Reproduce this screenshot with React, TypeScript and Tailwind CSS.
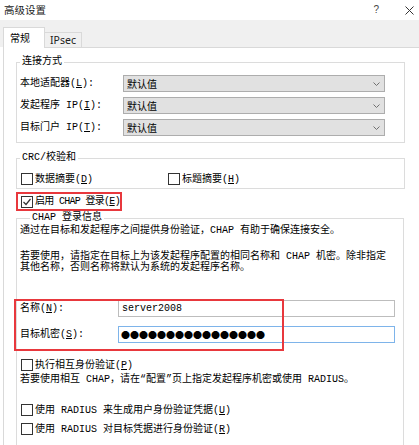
import React from 'react';

const body = "font-['Liberation_Mono','Noto_Sans_CJK_SC',monospace] text-[10px] leading-[11px] text-black";
const ui = "font-['Noto_Sans_CJK_SC',sans-serif]";

function K({ c }: { c: string }) {
  return <span className="underline underline-offset-1">{c}</span>;
}

function Chevron() {
  return (
    <svg width="7" height="4" viewBox="0 0 7 4" className="shrink-0">
      <polyline points="0.5,0.5 3.5,3.5 6.5,0.5" fill="none" stroke="#707070" strokeWidth="1" />
    </svg>
  );
}

function Check({ checked = false }: { checked?: boolean }) {
  return (
    <div className="w-[12px] h-[12px] border border-[#333] bg-white shrink-0 flex items-center justify-center">
      {checked && (
        <svg width="10" height="10" viewBox="0 0 10 10">
          <polyline points="1.5,5 4,7.5 8.5,2" fill="none" stroke="#333" strokeWidth="1.2" />
        </svg>
      )}
    </div>
  );
}

function Select({ label }: { label: React.ReactNode }) {
  return (
    <div className="flex items-center h-[17px]">
      <div className="w-[106px] pl-[3px] whitespace-nowrap">{label}</div>
      <div className="w-[262px] h-[17px] bg-[#e1e1e1] border border-[#adadad] flex items-center justify-between pl-[3px] pr-[4px]">
        <span className={`${ui} text-[10px] leading-[12px]`}>默认值</span>
        <Chevron />
      </div>
    </div>
  );
}

export default function App() {
  return (
    <div className={`w-[419px] h-[445px] overflow-hidden bg-white flex flex-col ${body}`}>
      {/* Title bar */}
      <div className="h-[20px] shrink-0 flex items-center justify-between pl-[4px] pr-[5px]">
        <span className={`${ui} text-[10.5px] leading-[12px] text-[#222]`}>高级设置</span>
        <div className="flex items-center gap-[26px]">
          <span className="font-['Liberation_Sans',sans-serif] text-[10px] leading-[12px] text-[#444]">?</span>
          <svg width="9" height="9" viewBox="0 0 9 9">
            <path d="M0.5 0.5 L8.5 8.5 M8.5 0.5 L0.5 8.5" stroke="#333" strokeWidth="1" />
          </svg>
        </div>
      </div>

      {/* Tab strip */}
      <div className="h-[27px] shrink-0 bg-[#f0f0f0] flex items-end pl-[3px]">
        <div className={`relative z-10 -mb-px w-[42px] h-[21px] bg-white border border-b-0 border-[#d9d9d9] flex items-center pl-[6px] pb-[1px] ${ui} text-[10px] leading-[12px]`}>
          常规
        </div>
        <div className="w-[37px] h-[15px] bg-[#f0f0f0] border border-l-0 border-b-0 border-[#d9d9d9] flex items-center justify-center font-['Noto_Sans',sans-serif] text-[10.5px] leading-[12px] text-[#222]">
          IPsec
        </div>
      </div>

      {/* Panel */}
      <div className="flex-1 ml-[3px] border-t border-l border-[#d9d9d9] bg-white">
        {/* 连接方式 */}
        <fieldset className="ml-[12px] mt-[8px] w-[389px] border border-[#dcdcdc] pt-[7px] pb-[6px] flex flex-col gap-[5px]">
          <legend className="ml-[3px] px-[2px] leading-[12px]">连接方式</legend>
          <Select label={<>本地适配器(<K c="L" />):</>} />
          <Select label={<>发起程序 IP(<K c="I" />):</>} />
          <Select label={<>目标门户 IP(<K c="T" />):</>} />
        </fieldset>

        {/* CRC/校验和 */}
        <fieldset className="ml-[12px] mt-[9px] w-[389px] border border-[#dcdcdc] pt-[9px] pb-[3px]">
          <legend className="ml-[3px] px-[2px] leading-[12px]">CRC/校验和</legend>
          <div className="flex items-center h-[12px]">
            <div className="w-[151px] flex items-center gap-[2px] pl-[4px]">
              <Check />
              <span>数据摘要(<K c="D" />)</span>
            </div>
            <div className="flex items-center gap-[2px]">
              <Check />
              <span>标题摘要(<K c="H" />)</span>
            </div>
          </div>
        </fieldset>

        {/* 启用 CHAP 登录 */}
        <div className="ml-[12px] mt-[3px] w-[106px] h-[19px] border-2 border-[#e8383d] flex items-center gap-[2px] pl-[3px] overflow-hidden">
          <Check checked />
          <span className="whitespace-nowrap tracking-[-0.7px]">启用 CHAP 登录(<K c="E" />)</span>
        </div>

        {/* CHAP 登录信息 */}
        <fieldset className="ml-[12px] mt-[1px] w-[388px] border border-[#dcdcdc] pb-[20px]">
          <legend className="ml-[13px] px-[2px] leading-[12px]">CHAP 登录信息</legend>
          <p className="pl-[3px] pt-[1px] whitespace-nowrap">
            通过在目标和发起程序之间提供身份验证，CHAP 有助于确保连接安全。
          </p>
          <p className="pl-[3px] mt-[15px] whitespace-nowrap">
            若要使用，请指定在目标上为该发起程序配置的相同名称和 CHAP 机密。除非指定
            <br />
            其他名称，否则名称将默认为系统的发起程序名称。
          </p>

          <div className="relative mt-[27px] flex flex-col gap-[9px]">
            <div className="flex items-center h-[17px]">
              <div className="w-[101px] pl-[3px]">名称(<K c="N" />):</div>
              <div className="w-[277px] h-[17px] border border-[#bdbdbd] flex items-center pl-[3px]">
                <span className="font-['Liberation_Mono',monospace] text-[10px] leading-[12px]">server2008</span>
              </div>
            </div>
            <div className="flex items-center h-[17px]">
              <div className="w-[101px] pl-[3px]">目标机密(<K c="S" />):</div>
              <div className="w-[277px] h-[17px] border border-[#7eb4ea] flex items-center pl-[2px]">
                <span className={`${ui} text-[9px] leading-[10px]`}>●●●●●●●●●●●●●●●●</span>
              </div>
            </div>
            {/* annotation box */}
            <div className="absolute left-[-3px] top-[-1px] w-[270px] h-[52px] border-2 border-[#e8383d] pointer-events-none" />
          </div>

          <div className="mt-[16px] pl-[4px] flex items-center gap-[2px] h-[12px]">
            <Check />
            <span className="whitespace-nowrap">执行相互身份验证(<K c="P" />)</span>
          </div>
          <p className="pl-[3px] mt-[3px] whitespace-nowrap">
            若要使用相互 CHAP，请在“配置”页上指定发起程序机密或使用 RADIUS。
          </p>
          <div className="mt-[19px] pl-[4px] flex items-center gap-[2px] h-[12px]">
            <Check />
            <span className="whitespace-nowrap">使用 RADIUS 来生成用户身份验证凭据(<K c="U" />)</span>
          </div>
          <div className="mt-[7px] pl-[4px] flex items-center gap-[2px] h-[12px]">
            <Check />
            <span className="whitespace-nowrap">使用 RADIUS 对目标凭据进行身份验证(<K c="R" />)</span>
          </div>
        </fieldset>
      </div>
    </div>
  );
}
